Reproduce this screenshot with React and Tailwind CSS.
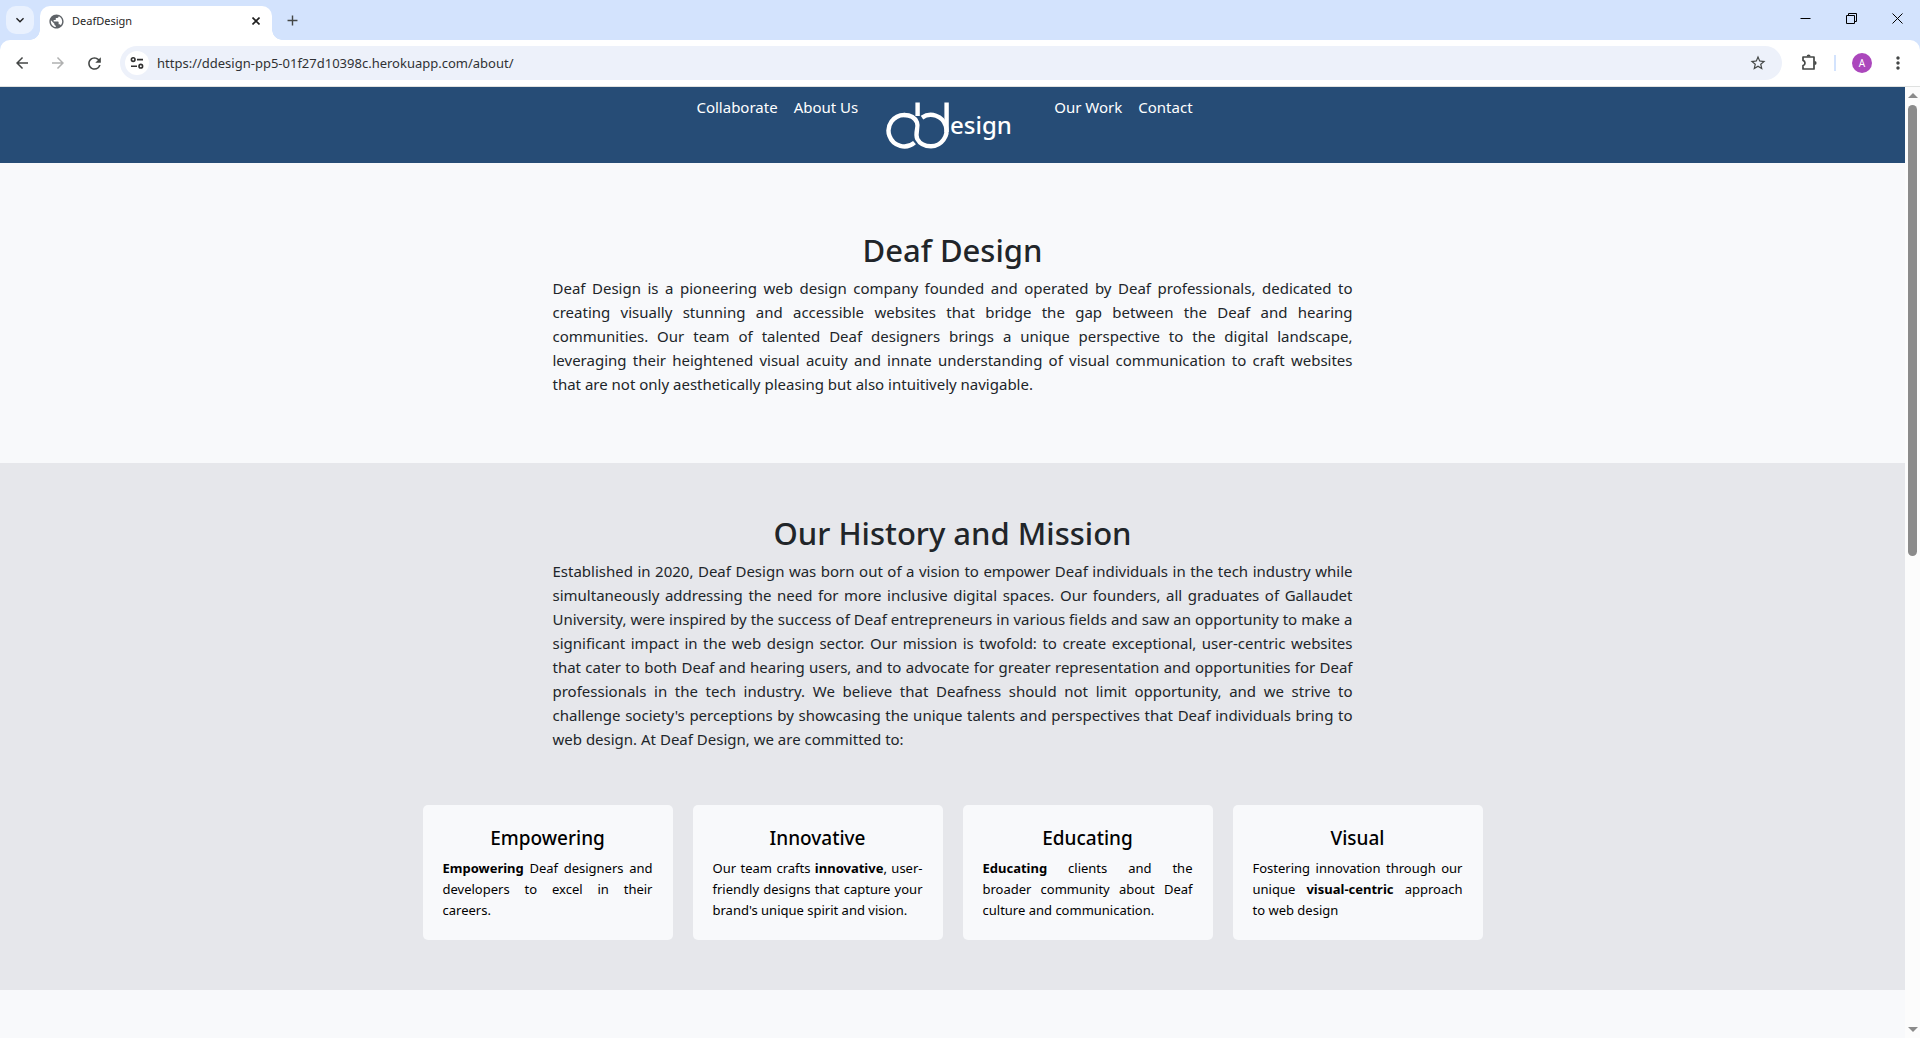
import {
  MdArrowBack,
  MdArrowForward,
  MdKeyboardArrowDown,
  MdAdd,
  MdMoreVert,
  MdPublic,
  MdRefresh,
  MdStarBorder,
} from "react-icons/md";

const values = [
  {
    title: "Empowering",
    text: (
      <>
        <strong>Empowering</strong> Deaf designers and developers to excel in their careers.
      </>
    ),
  },
  {
    title: "Innovative",
    text: (
      <>
        Our team crafts <strong>innovative</strong>, user-friendly designs that capture your
        brand's unique spirit and vision.
      </>
    ),
  },
  {
    title: "Educating",
    text: (
      <>
        <strong>Educating</strong> clients and the broader&nbsp;community about Deaf culture and
        communication.
      </>
    ),
  },
  {
    title: "Visual",
    text: (
      <>
        Fostering innovation through our unique <strong>visual-centric</strong> approach to web
        design
      </>
    ),
  },
];

function SiteSettingsIcon() {
  return (
    <svg width="14" height="14" viewBox="0 0 14 14" fill="none" stroke="currentColor" strokeWidth="1.6">
      <circle cx="3.2" cy="3.6" r="1.8" />
      <path d="M7 3.6h6M1 10.2h6" />
      <circle cx="10.8" cy="10.2" r="1.8" />
    </svg>
  );
}

function ExtensionsIcon() {
  return (
    <svg width="18" height="18" viewBox="0 0 18 18" fill="none">
      <path
        d="M3 3h11v12H3v-3.4c1.4-.4 2-1.4 2-2.6s-.6-2.2-2-2.6z"
        stroke="currentColor"
        strokeWidth="1.7"
        strokeLinejoin="round"
      />
      <path d="M6.6 2.6a2 2 0 0 1 4 0zM14.6 7a2 2 0 0 1 0 4z" fill="currentColor" />
    </svg>
  );
}

function TabStrip() {
  return (
    <div className="flex h-10 shrink-0 items-end bg-[#d3e3fd] pl-1.5">
      <button
        aria-label="Search tabs"
        className="mb-1.5 flex size-7 items-center justify-center rounded-[10px] bg-[#e9f1fe] text-[#1f1f1f]"
      >
        <MdKeyboardArrowDown size={16} />
      </button>
      <div className="relative ml-1.5 flex h-[34px] w-58 items-center rounded-t-[10px] bg-white pr-3 pb-1 pl-2">
        <span className="absolute bottom-0 -left-2.5 size-2.5 bg-[radial-gradient(circle_at_0_0,transparent_9.5px,white_10px)]" />
        <span className="absolute -right-2.5 bottom-0 size-2.5 bg-[radial-gradient(circle_at_100%_0,transparent_9.5px,white_10px)]" />
        <MdPublic size={17} className="text-[#5f6368]" />
        <span className="ml-[7px] flex-1 text-[11px] text-[#1f1f1f]">DeafDesign</span>
        <button aria-label="Close tab" className="text-[#1f1f1f]">
          <svg width="8" height="8" viewBox="0 0 8 8" stroke="currentColor" strokeWidth="1.6">
            <path d="M.5.5l7 7M7.5.5l-7 7" />
          </svg>
        </button>
      </div>
      <button aria-label="New tab" className="mb-2.5 ml-2.5 flex size-5 items-center justify-center text-[#444746]">
        <MdAdd size={17} />
      </button>
      <div className="ml-auto flex h-10 items-center pb-1 text-black">
        <button aria-label="Minimize" className="flex w-[46px] justify-center">
          <svg width="11" height="11" viewBox="0 0 11 11" stroke="currentColor">
            <path d="M.5 5.5h10" />
          </svg>
        </button>
        <button aria-label="Restore" className="flex w-[46px] justify-center">
          <svg width="11" height="11" viewBox="0 0 11 11" fill="none" stroke="currentColor">
            <path d="M.5 2.5h8v8h-8zM2.5 2.5v-2h8v8h-2" />
          </svg>
        </button>
        <button aria-label="Close" className="flex w-[46px] justify-center">
          <svg width="11" height="11" viewBox="0 0 11 11" stroke="currentColor">
            <path d="M.5.5l10 10M10.5.5l-10 10" />
          </svg>
        </button>
      </div>
    </div>
  );
}

function Toolbar() {
  return (
    <div className="shrink-0 bg-[#d3e3fd]">
      <div className="flex h-[47px] items-center rounded-t-[10px] border-b border-[#dfe1e0] bg-white pr-3 pl-1 text-[#444746]">
        <button aria-label="Back" className="flex w-9 justify-center">
          <MdArrowBack size={18} />
        </button>
        <button aria-label="Forward" className="flex w-9 justify-center text-[#b0b1b1]">
          <MdArrowForward size={18} />
        </button>
        <button aria-label="Reload" className="flex w-9 justify-center">
          <MdRefresh size={19} />
        </button>
        <div className="ml-2 flex h-[34px] flex-1 items-center rounded-full bg-[#edf1fa] pr-[15px] pl-[5px]">
          <button
            aria-label="View site information"
            className="flex size-6 items-center justify-center rounded-full bg-white text-[#303030]"
          >
            <SiteSettingsIcon />
          </button>
          <input
            aria-label="Address"
            defaultValue="https://ddesign-pp5-01f27d10398c.herokuapp.com/about/"
            className="ml-2 min-w-0 flex-1 bg-transparent text-[13px] leading-6 text-[#303134] outline-none"
          />
          <button aria-label="Bookmark this tab">
            <MdStarBorder size={18} />
          </button>
        </div>
        <button aria-label="Extensions" className="ml-[18px]">
          <ExtensionsIcon />
        </button>
        <span className="ml-4 h-4 w-0.5 bg-[#d3e3fd]" />
        <button
          aria-label="Profile"
          className="ml-4 flex size-5 items-center justify-center rounded-full bg-[#ab47bc] text-[10px] text-white"
        >
          A
        </button>
        <button aria-label="Menu" className="ml-4">
          <MdMoreVert size={20} />
        </button>
      </div>
    </div>
  );
}

function Logo() {
  return (
    <svg width="126" height="48" viewBox="0 0 126 48" role="img" aria-label="DDesign">
      <g fill="none" stroke="white" strokeWidth="4.4">
        <path d="M18.5 13A15.7 15.7 0 1 0 28.5 40.6" />
        <path d="M36 15.6A15.7 15.7 0 1 1 45 44.3" />
        <path d="M18 13C24 13 29 15.5 31 20.5C33 25.5 28.6 30.5 31.3 37C34 42 39 44.3 45 44.3" />
        <path d="M31.6 .5V14M60.6 .5V30" />
      </g>
      <text x="64" y="32" fill="white" className="font-['Noto_Sans'] text-[24px] font-medium">
        esign
      </text>
    </svg>
  );
}

function Navbar() {
  return (
    <nav className="flex h-[76px] justify-center bg-[#264c76] pr-4 text-[15px] leading-6 text-white">
      <div className="flex gap-4 p-2">
        <a href="#collaborate">Collaborate</a>
        <a href="#about">About Us</a>
      </div>
      <a href="#home" className="w-[180px] pt-[15px] pl-5">
        <Logo />
      </a>
      <div className="flex gap-4 p-2">
        <a href="#work">Our Work</a>
        <a href="#contact">Contact</a>
      </div>
    </nav>
  );
}

function Intro({ title, children }) {
  return (
    <div className="mx-auto max-w-[800px]">
      <h1 className="mb-1.5 text-center text-[31px] leading-[39px] font-medium">{title}</h1>
      <p className="text-justify text-[15px] leading-6">{children}</p>
    </div>
  );
}

function ScrollBar() {
  return (
    <div className="flex w-[15px] shrink-0 flex-col items-center bg-[#fcfcfc] py-1.5 text-[#8b8b8b]">
      <svg width="10" height="5" viewBox="0 0 10 5" fill="currentColor" className="shrink-0">
        <path d="M0 5L5 0L10 5z" />
      </svg>
      <div className="mt-[7px] h-[48%] w-[9px] rounded-full bg-[#8b8b8b]" />
      <svg width="10" height="5" viewBox="0 0 10 5" fill="currentColor" className="mt-auto shrink-0">
        <path d="M0 0L5 5L10 0z" />
      </svg>
    </div>
  );
}

export default function App() {
  return (
    <div className="flex h-screen flex-col overflow-hidden font-['Noto_Sans',sans-serif]">
      <TabStrip />
      <Toolbar />
      <div className="flex min-h-0 flex-1">
        <div className="min-w-0 flex-1 overflow-hidden bg-[#f8f9fb] text-[#212529]">
          <Navbar />
          <section className="px-4 pt-[68px] pb-[67px]">
            <Intro title="Deaf Design">
              Deaf Design is a pioneering web design company founded and operated by Deaf
              professionals, dedicated to creating visually stunning and accessible websites that
              bridge the gap between the Deaf and hearing communities. Our team of talented Deaf
              designers brings a unique perspective to the digital landscape, leveraging their
              heightened visual acuity and innate understanding of visual communication to craft
              websites that are not only aesthetically pleasing but also intuitively navigable.
            </Intro>
          </section>
          <section className="bg-[#e6e7eb] px-4 pt-[51px] pb-[50px]">
            <Intro title="Our History and Mission">
              Established in 2020, Deaf Design was born out of a vision to empower Deaf individuals
              in the tech industry while simultaneously addressing the need for more inclusive
              digital spaces. Our founders, all graduates of Gallaudet University, were inspired by
              the success of Deaf entrepreneurs in various fields and saw an opportunity to make a
              significant impact in the web design sector. Our mission is twofold: to create
              exceptional, user-centric websites that cater to both Deaf and hearing users, and to
              advocate for greater representation and opportunities for Deaf professionals in the
              tech industry. We believe that Deafness should not limit opportunity, and we strive to
              challenge society's perceptions by showcasing the unique talents and perspectives that
              Deaf individuals bring to web design. At Deaf Design, we are committed to:
            </Intro>
            <div className="mx-auto mt-[54px] grid max-w-[1060px] grid-cols-4 gap-5 text-black">
              {values.map((value) => (
                <article
                  key={value.title}
                  className="rounded-[5px] bg-[#f8f9fb] px-5 pt-[21px] pb-[19px]"
                >
                  <h2 className="mb-2 text-center text-[19px] leading-6 font-medium">
                    {value.title}
                  </h2>
                  <p className="text-justify text-[13px] leading-[21px]">{value.text}</p>
                </article>
              ))}
            </div>
          </section>
        </div>
        <ScrollBar />
      </div>
    </div>
  );
}
